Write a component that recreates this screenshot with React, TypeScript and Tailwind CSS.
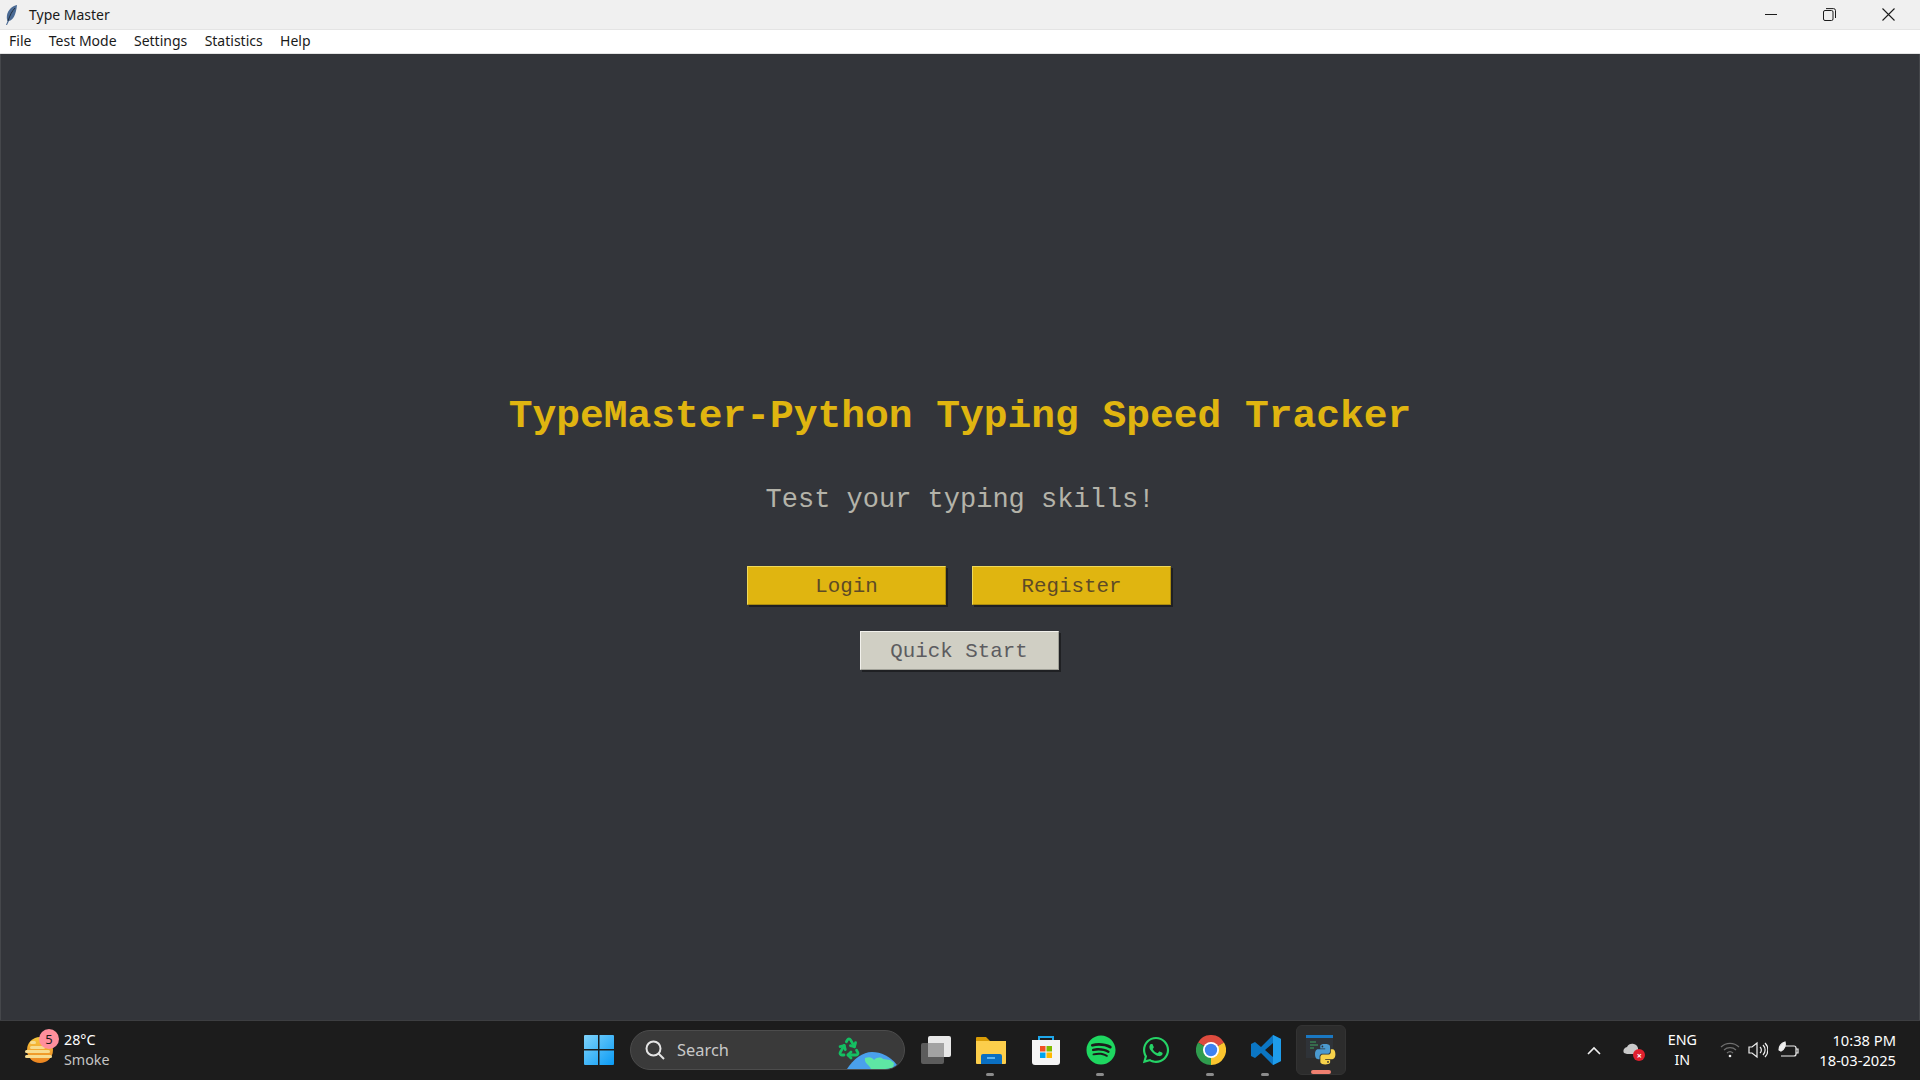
import { FaSpotify, FaWhatsapp } from "react-icons/fa"
import { Recycle } from "lucide-react"

const ui = "font-['Noto_Sans',sans-serif]"

function Feather() {
  return (
    <svg width="16" height="22" viewBox="0 0 16 22">
      <path d="M13 1C8 2 4 6 3 11c-.5 3 0 5 .5 6L2 21h1l2-4c4-1 7-6 8-16z" fill="#4a6a94" />
      <path d="M11 4C8 7 6 11 4 17" stroke="#23303f" strokeWidth="1" fill="none" />
    </svg>
  )
}

function WindowButtons() {
  return (
    <div className="ml-auto mr-[2px] flex items-center text-[#1c1c1c]">
      <div className="flex h-[29px] w-[58px] items-center justify-center">
        <svg width="12" height="12" viewBox="0 0 12 12">
          <path d="M0 5.5h12" stroke="currentColor" />
        </svg>
      </div>
      <div className="flex h-[29px] w-[58px] items-center justify-center">
        <svg width="13" height="13" viewBox="0 0 13 13" fill="none" stroke="currentColor">
          <rect x="0.5" y="2.5" width="9.5" height="10" rx="1.5" />
          <path d="M3 .6h7.5a2 2 0 0 1 2 2V10" />
        </svg>
      </div>
      <div className="flex h-[29px] w-[60px] items-center justify-center">
        <svg width="13" height="13" viewBox="0 0 13 13">
          <path d="M.5.5l12 12M12.5.5l-12 12" stroke="currentColor" strokeWidth="1.1" />
        </svg>
      </div>
    </div>
  )
}

function MonoButton({ label, tone }: { label: string; tone: "gold" | "grey" }) {
  return (
    <button
      type="button"
      className={
        tone === "gold"
          ? "h-[39px] w-[199px] border border-t-[#efd95a] border-l-[#efd95a] border-b-[#ab8c10] border-r-[#ab8c10] bg-[#e0b510] pt-[3px] font-['Liberation_Mono',monospace] text-[20.8px] text-[#5d4a26] shadow-[2px_2px_0_#1f2023]"
          : "h-[39px] w-[199px] border border-t-[#f2f1ec] border-l-[#f2f1ec] border-b-[#a0a097] border-r-[#a0a097] bg-[#d0cfc4] pt-[3px] font-['Liberation_Mono',monospace] text-[20.8px] text-[#5c5c60] shadow-[2px_2px_0_#1f2023]"
      }
    >
      {label}
    </button>
  )
}

function Weather() {
  return (
    <div className="flex items-center">
      <div className="relative ml-[25px] h-[36px] w-[30px]">
        <svg width="30" height="36" viewBox="0 0 30 36" className="absolute left-0 top-0">
          <defs>
            <linearGradient id="sun" x1="0" y1="0" x2="0" y2="1">
              <stop offset="0" stopColor="#f6c83e" />
              <stop offset="1" stopColor="#ec8420" />
            </linearGradient>
          </defs>
          <circle cx="15" cy="18" r="13" fill="url(#sun)" />
          <rect x="5" y="9" width="6" height="3" rx="1.5" fill="#f7dc8f" />
          <rect x="5" y="14" width="15" height="3" rx="1.5" fill="#f7dc8f" />
          <rect x="0" y="18" width="25" height="3" rx="1.5" fill="#f7dc8f" />
          <rect x="0" y="23" width="27" height="3" rx="1.5" fill="#f7dc8f" />
        </svg>
        <span className="absolute left-[14px] top-[-3px] flex h-[20px] w-[20px] items-center justify-center rounded-full bg-[#ff8f9c] text-[13px] leading-none text-[#1b1b1b]">
          5
        </span>
      </div>
      <div className="ml-[9px] flex flex-col text-[14.3px] leading-[20px]">
        <span className="text-white">28°C</span>
        <span className="text-[#c4c4c4]">Smoke</span>
      </div>
    </div>
  )
}

function StartIcon() {
  return (
    <svg width="30" height="30" viewBox="0 0 30 30">
      <defs>
        <linearGradient id="win" x1="0" y1="0" x2="1" y2="1">
          <stop offset="0" stopColor="#7fd3fb" />
          <stop offset="1" stopColor="#0a9bf5" />
        </linearGradient>
      </defs>
      <path
        d="M1 0h13v14H0V1a1 1 0 0 1 1-1zM15.5 0H29a1 1 0 0 1 1 1v13H15.5zM0 15.5h14V30H1a1 1 0 0 1-1-1zM15.5 15.5H30V29a1 1 0 0 1-1 1H15.5z"
        fill="url(#win)"
      />
    </svg>
  )
}

function SearchBox() {
  return (
    <div className="relative ml-[16px] flex h-[40px] w-[275px] items-center overflow-hidden rounded-full border border-[#4c4c4c] bg-[#3a3a3a]">
      <svg width="20" height="20" viewBox="0 0 20 20" fill="none" stroke="#e4e4e4" strokeWidth="2" className="ml-[14px]">
        <circle cx="8.5" cy="8.5" r="7" />
        <path d="M13.5 13.5L19 19" />
      </svg>
      <span className="ml-[12px] text-[16.4px] text-[#c8c8c8]">Search</span>
      <svg width="62" height="38" viewBox="0 0 62 38" className="absolute left-[206px] top-0">
        <path d="M10 38C16 28 26 21 35 21c9 0 18 4 25 13l-2 4z" fill="#4aa0ec" />
        <path d="M28 27c5-2 8 0 9 2 3-3 7-3 9-1l7 1 4 3-1 6H34c-1-4-7-5-6-11z" fill="#5ee6a4" />
      </svg>
      <Recycle size={24} color="#14bf62" strokeWidth={2.8} className="absolute left-[206px] top-[5px]" />
    </div>
  )
}

function TaskViewIcon() {
  return (
    <svg width="30" height="30" viewBox="0 0 30 30">
      <rect x="0" y="8" width="23" height="21" rx="2" fill="#5c5c5c" />
      <rect x="7" y="1" width="23" height="21" rx="2" fill="#e8e8e8" />
      <rect x="7" y="8" width="16" height="14" fill="#a3a3a3" />
    </svg>
  )
}

function FolderIcon() {
  return (
    <svg width="30" height="28" viewBox="0 0 30 28">
      <path d="M0 2a1 1 0 0 1 1-1h9l4 4h15v4H0z" fill="#d99c06" />
      <path d="M0 5h30v22a1 1 0 0 1-1 1H1a1 1 0 0 1-1-1z" fill="#fcce4b" />
      <path d="M5 20a2 2 0 0 1 2-2h-1 18a2 2 0 0 1 2 2v8H5z" fill="#0a6fc2" />
      <rect x="11" y="21" width="8" height="2" fill="#5cb4f0" />
    </svg>
  )
}

function StoreIcon() {
  return (
    <svg width="30" height="30" viewBox="0 0 30 30">
      <path d="M8 6V2h14v4" fill="none" stroke="#1ea7ea" strokeWidth="2" />
      <path d="M1 5h28v22a3 3 0 0 1-3 3H4a3 3 0 0 1-3-3z" fill="#f4f4f4" />
      <rect x="9" y="11" width="5.5" height="5.5" fill="#f25022" />
      <rect x="15.5" y="11" width="5.5" height="5.5" fill="#7fba00" />
      <rect x="9" y="17.5" width="5.5" height="5.5" fill="#00a4ef" />
      <rect x="15.5" y="17.5" width="5.5" height="5.5" fill="#ffb900" />
    </svg>
  )
}

function ChromeIcon() {
  return (
    <svg width="30" height="30" viewBox="0 0 30 30">
      <path d="M15 15L2 7.5A15 15 0 0 1 28 7.5z" fill="#dd4b3e" />
      <path d="M15 15L28 7.5A15 15 0 0 1 15 30z" fill="#fbc52e" />
      <path d="M15 15L15 30A15 15 0 0 1 2 7.5z" fill="#2f9c4e" />
      <circle cx="15" cy="15" r="8" fill="#fff" />
      <circle cx="15" cy="15" r="6.2" fill="#3f82f0" />
    </svg>
  )
}

function CodeIcon() {
  return (
    <svg width="30" height="30" viewBox="0 0 30 30">
      <path d="M22 0l8 4v22l-8 4-12-12-6 5-4-2V9l4-2 6 5zM22 8l-8 7 8 7z" fill="#0b76c4" />
      <path d="M22 0l8 4v22l-8 4z" fill="#1e9ceb" />
    </svg>
  )
}

function PythonIcon() {
  return (
    <svg width="30" height="30" viewBox="0 0 30 30">
      <rect x="0" y="0" width="27" height="23" fill="#2f3338" />
      <rect x="0" y="0" width="27" height="3" fill="#1a78c2" />
      <path d="M4 7h6M4 10h8M4 13h4" stroke="#3fa360" strokeWidth="1" />
      <g transform="translate(9 9) scale(.85)">
        <path
          d="M11.9 0C5.8 0 6.2 2.6 6.2 2.6v2.7h5.8v.8H3.9S0 5.7 0 11.9s3.4 6 3.4 6h2v-2.9s-.1-3.4 3.3-3.4h5.8s3.2.1 3.2-3.1V3.2S18.2 0 11.9 0zM8.7 1.9a1 1 0 1 1 0 2.1 1 1 0 0 1 0-2.1z"
          fill="#4b9ad0"
          fillRule="evenodd"
        />
        <path
          d="M12.1 24c6.1 0 5.7-2.6 5.7-2.6v-2.7H12v-.8h8.1s3.9.4 3.9-5.8-3.4-6-3.4-6h-2v2.9s.1 3.4-3.3 3.4H9.5s-3.2-.1-3.2 3.1v5.3S5.8 24 12.1 24zm3.2-1.9a1 1 0 1 1 0-2.1 1 1 0 0 1 0 2.1z"
          fill="#f7d24a"
          fillRule="evenodd"
        />
      </g>
    </svg>
  )
}

function TaskItem({ children, dot }: { children: React.ReactNode; dot?: boolean }) {
  return (
    <div className="relative flex h-[50px] w-[55px] items-center justify-center">
      {children}
      {dot && <span className="absolute bottom-[-1px] left-[23px] h-[3px] w-[8px] rounded-full bg-[#8c8c8c]" />}
    </div>
  )
}

function Tray() {
  return (
    <div className="ml-auto flex items-center text-white">
      <svg width="14" height="9" viewBox="0 0 14 9" fill="none" stroke="#f0f0f0" strokeWidth="1.6">
        <path d="M1 8l6-6 6 6" />
      </svg>
      <div className="relative ml-[22px] h-[20px] w-[20px]">
        <svg width="20" height="20" viewBox="0 0 20 20">
          <path d="M1 13a4 4 0 0 1 3-6 6 6 0 0 1 11 1v6H4z" fill="#c9c9c9" />
        </svg>
        <span className="absolute bottom-[-1px] right-[-2px] flex h-[12px] w-[12px] items-center justify-center rounded-full bg-[#e0202e] text-[9px] font-bold leading-none text-white">
          ×
        </span>
      </div>
      <div className="ml-[21px] flex w-[36px] flex-col items-center text-[14.3px] leading-[20px]">
        <span>ENG</span>
        <span>IN</span>
      </div>
      <svg width="20" height="16" viewBox="0 0 20 16" fill="none" stroke="#6f6f6f" strokeWidth="1.2" className="ml-[19.5px]">
        <path d="M1 5a13 13 0 0 1 18 0M4 8a9 9 0 0 1 12 0M7 11a4.5 4.5 0 0 1 6 0" />
        <circle cx="10" cy="14" r="1.3" fill="#f0f0f0" stroke="none" />
      </svg>
      <svg width="20" height="18" viewBox="0 0 20 18" fill="none" stroke="#f0f0f0" strokeWidth="1.2" className="ml-[8.5px]">
        <path d="M1 6h3l5-4v14l-5-4H1zM12 6a4 4 0 0 1 0 6M15 4a7 7 0 0 1 0 10M17 2a10 10 0 0 1 0 14" />
      </svg>
      <svg width="21" height="18" viewBox="0 0 21 18" fill="none" stroke="#f0f0f0" strokeWidth="1.2" className="ml-[10px]">
        <path d="M7 5h9a2 2 0 0 1 2 2v6a2 2 0 0 1-2 2H3M18 8h2v4h-2" />
        <path d="M1 9c0-4 3-7 6-8 1 3 0 7-4 9z" fill="#f0f0f0" />
      </svg>
      <div className="ml-[20px] mr-[24px] flex flex-col items-end text-[14.7px] leading-[20px]">
        <span>10:38 PM</span>
        <span>18-03-2025</span>
      </div>
    </div>
  )
}

export default function App() {
  return (
    <div className={`flex h-[1080px] w-[1920px] flex-col overflow-hidden bg-[#33353a] ${ui}`}>
      <div className="flex h-[29px] items-center bg-[#f0f0f0]">
        <div className="ml-[4px]">
          <Feather />
        </div>
        <span className="ml-[9px] text-[14px] text-[#1a1a1a]">Type Master</span>
        <WindowButtons />
      </div>

      <nav className="flex h-[25px] items-center gap-[17.4px] border-t border-b border-[#e4e4e4] bg-white pb-[2px] pl-[9px] text-[14px] text-[#1a1a1a]">
        <span>File</span>
        <span>Test Mode</span>
        <span>Settings</span>
        <span>Statistics</span>
        <span>Help</span>
      </nav>

      <main className="flex flex-1 flex-col items-center border-x border-[#45474b] pt-[338px]">
        <h1 className="font-['Liberation_Mono',monospace] text-[39.6px] font-bold leading-[50px] text-[#e0b510]">
          TypeMaster-Python Typing Speed Tracker
        </h1>
        <p className="mt-[42px] font-['Liberation_Mono',monospace] text-[27px] leading-[32px] text-[#b4b3a9]">
          Test your typing skills!
        </p>
        <div className="mr-[2px] mt-[50px] flex gap-[26px]">
          <MonoButton label="Login" tone="gold" />
          <MonoButton label="Register" tone="gold" />
        </div>
        <div className="mr-[2px] mt-[26px]">
          <MonoButton label="Quick Start" tone="grey" />
        </div>
      </main>

      <footer className="flex h-[60px] items-center border-t border-[#3d3e41] bg-[#1c1c1c] pb-[1px]">
        <div className="w-[584px] shrink-0">
          <Weather />
        </div>
        <StartIcon />
        <SearchBox />
        <div className="ml-[3px] flex items-center">
          <TaskItem>
            <TaskViewIcon />
          </TaskItem>
          <TaskItem dot>
            <FolderIcon />
          </TaskItem>
          <TaskItem>
            <StoreIcon />
          </TaskItem>
          <TaskItem dot>
            <FaSpotify size={30} color="#1ed760" />
          </TaskItem>
          <TaskItem>
            <FaWhatsapp size={30} color="#25d366" />
          </TaskItem>
          <TaskItem dot>
            <ChromeIcon />
          </TaskItem>
          <TaskItem dot>
            <CodeIcon />
          </TaskItem>
          <div className="relative ml-[3px] flex h-[50px] w-[50px] items-center justify-center rounded-md border border-[#333] bg-[#2c2c2c]">
            <PythonIcon />
            <span className="absolute bottom-[0px] left-[14px] h-[4px] w-[20px] rounded-full bg-[#f08070]" />
          </div>
        </div>
        <Tray />
      </footer>
    </div>
  )
}
